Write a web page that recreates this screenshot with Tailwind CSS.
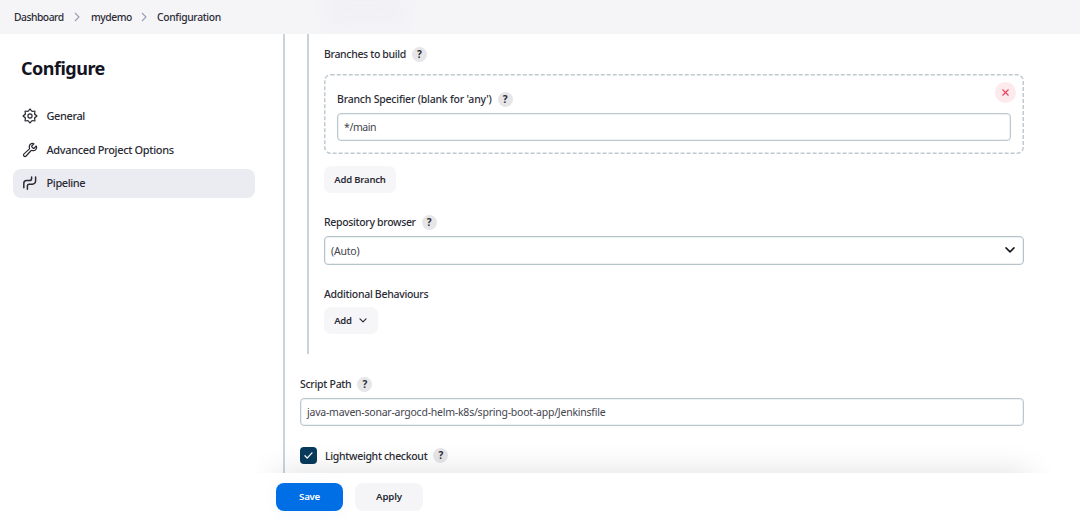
<!DOCTYPE html>
<html lang="en">
<head>
    <meta charset="UTF-8">
    <meta name="viewport" content="width=device-width, initial-scale=1.0">
    <title>mydemo Config [Jenkins]</title>
    <script src="https://cdn.jsdelivr.net/npm/@tailwindcss/browser@4"></script>
</head>
<body class="h-[520px] overflow-hidden flex flex-col bg-white text-[#2b2b35] font-['Noto_Sans',sans-serif] text-[10.5px] leading-4 font-medium">
    <!-- Breadcrumbs -->
    <header class="relative h-[34px] shrink-0 flex items-center pl-[14px] bg-[#f5f5f8] overflow-hidden text-[10.3px]">
        <div class="absolute left-[328px] -top-2 w-[76px] h-[34px] rounded-xl bg-[#efeff3]/70 blur-[8px]"></div>
        <span class="w-[50px] whitespace-nowrap tracking-[-0.48px]">Dashboard</span>
        <svg class="ml-[10px] mr-[11px] w-[6px] h-[10px]" viewBox="0 0 6 10" fill="none" stroke="#9b9bb0" stroke-width="1.1"><path d="M1 1l4 4-4 4"/></svg>
        <span class="w-[40px] whitespace-nowrap tracking-[-0.45px]">mydemo</span>
        <svg class="ml-[10px] mr-[10px] w-[6px] h-[10px]" viewBox="0 0 6 10" fill="none" stroke="#9b9bb0" stroke-width="1.1"><path d="M1 1l4 4-4 4"/></svg>
        <span class="whitespace-nowrap tracking-[-0.32px]">Configuration</span>
    </header>

    <div class="flex flex-1 min-h-0">
        <!-- Side panel -->
        <aside class="w-[255px] shrink-0 pl-[12.5px] pt-[22px]">
            <h1 class="pl-[8.5px] h-6 text-[18px] leading-6 font-bold text-[#14141f] tracking-[-0.5px]">Configure</h1>
            <nav class="mt-[21.5px] flex flex-col gap-1 text-[11px]">
                <a class="h-[29.5px] pl-[9px] flex items-center gap-[9px] rounded-[8px] whitespace-nowrap">
                    <svg class="w-4 h-4" viewBox="-8.9 -8.9 17.8 17.8" fill="none" stroke="currentColor" stroke-width="1.35" stroke-linejoin="round"><path d="M-.92-6.62Q0-8.8 .92-6.62T4.03-5.33T5.33-4.03T6.62-.92T6.62 .92T5.33 4.03T4.03 5.33T.92 6.62T-.92 6.62T-4.03 5.33T-5.33 4.03T-6.62 .92T-6.62-.92T-5.33-4.03T-4.03-5.33T-.92-6.62Z"/><circle r="2.3"/></svg>
                    <span class="tracking-[-0.4px]">General</span>
                </a>
                <a class="h-[29.5px] pl-[9px] flex items-center gap-[9px] rounded-[8px] whitespace-nowrap">
                    <svg class="w-4 h-4" viewBox="0 0 512 512" fill="none" stroke="currentColor" stroke-width="40" stroke-linecap="round" stroke-linejoin="round"><path d="M393.87 190a32.1 32.1 0 01-45.25 0l-26.57-26.57a32.09 32.09 0 010-45.26L382.19 58a1 1 0 00-.3-1.64c-38.82-16.64-89.15-8.16-121.11 23.57-30.58 30.35-32.32 76-21.12 115.84a31.93 31.93 0 01-9.06 32.08L64 380a48.17 48.17 0 1068 68l153.86-167a31.93 31.93 0 0131.6-9.13c39.54 10.59 84.54 8.6 114.72-21.19 32.49-32 39.5-88.56 23.75-120.93a1 1 0 00-1.6-.26z"/></svg>
                    <span class="tracking-[-0.35px]">Advanced Project Options</span>
                </a>
                <a class="h-[29.5px] pl-[9px] flex items-center gap-[9px] rounded-[8px] whitespace-nowrap bg-[#ebebf2]">
                    <svg class="w-4 h-4" viewBox="0 0 16 16" fill="none" stroke="currentColor" stroke-width="1.5" stroke-linecap="round" stroke-linejoin="round"><path d="M1.8 12.8V8.4a2.8 2.8 0 012.8-2.8h2.8a2.2 2.2 0 002.2-2.2V1.9M5.4 14.2V11a1.8 1.8 0 011.8-1.8h3.2a3.2 3.2 0 003.2-3.2V1.9"/></svg>
                    <span class="tracking-[-0.4px]">Pipeline</span>
                </a>
            </nav>
        </aside>

        <!-- Form -->
        <main class="relative flex-1 flex flex-col min-w-0">
            <section class="ml-[28px] w-[741px] h-[439px] shrink-0 border-l-2 border-[#ccd4da] pl-[15px]">
                <div class="ml-[7px] h-[320px] border-l-2 border-[#ccd3d8] pl-[15px] pt-3 flex flex-col items-start">
                    <div class="h-4 flex items-center gap-[6px]">
                        <span class="tracking-[-0.34px]">Branches to build</span>
                        <span class="size-[15px] rounded-full bg-[#e6e6e8] text-center text-[10px] leading-[15px] font-bold">?</span>
                    </div>
                    <div class="relative mt-3 w-[700px] h-20 pl-[13px] pt-[17px]">
                        <svg class="absolute inset-0 w-[700px] h-20" fill="none" stroke="#bfcad1" stroke-width="1.5" stroke-dasharray="4 2"><rect x="0.75" y="0.75" width="698.5" height="78.5" rx="6"/></svg>
                        <div class="h-4 flex items-center gap-[6px]">
                            <span class="tracking-[-0.21px]">Branch Specifier (blank for 'any')</span>
                            <span class="size-[15px] rounded-full bg-[#e6e6e8] text-center text-[10px] leading-[15px] font-bold">?</span>
                        </div>
                        <div class="mt-[6px] w-[674px] h-7 rounded-[4px] border border-[#bcc8cf] shadow-[inset_0_0_0_1px_#edf1f3] px-[6px] flex items-center font-normal text-[#44444e]">
                            <span class="tracking-[-0.4px]">*/main</span>
                        </div>
                        <button class="absolute right-[8px] top-[8px] size-[21px] rounded-full bg-[#fdeaed] flex items-center justify-center">
                            <svg class="w-[7px] h-[7px]" viewBox="0 0 7 7" stroke="#e6405c" stroke-width="1.1"><path d="M.5.5l6 6M6.5.5l-6 6"/></svg>
                        </button>
                    </div>
                    <button class="mt-3 w-[72px] h-[27px] shrink-0 rounded-[7px] bg-[#f6f6f8] text-[9.5px] font-semibold whitespace-nowrap tracking-[-0.2px]"><span>Add Branch</span></button>
                    <div class="mt-[21px] h-4 flex items-center gap-[6px]">
                        <span class="tracking-[-0.33px]">Repository browser</span>
                        <span class="size-[15px] rounded-full bg-[#e6e6e8] text-center text-[10px] leading-[15px] font-bold">?</span>
                    </div>
                    <div class="mt-[6px] w-[700px] h-[29px] shrink-0 rounded-[4px] border border-[#b5c4cb] shadow-[inset_0_0_0_1px_#edf1f3] pl-[6px] pr-[8px] flex items-center justify-between font-normal text-[#44444e]">
                        <span class="tracking-[-0.2px]">(Auto)</span>
                        <svg class="w-[10px] h-[6px] -mt-0.5" viewBox="0 0 10 6" fill="none" stroke="#14141f" stroke-width="1.5" stroke-linecap="round" stroke-linejoin="round"><path d="M1 .9l4 4 4-4"/></svg>
                    </div>
                    <div class="mt-[21px] h-4 tracking-[-0.3px]"><span>Additional Behaviours</span></div>
                    <button class="mt-[5px] w-[54px] h-[27px] shrink-0 rounded-[7px] bg-[#f6f6f8] pl-[10px] flex items-center gap-[7px] text-[9.5px] font-semibold">
                        <span class="w-[18px] tracking-[-0.2px]">Add</span>
                        <svg class="w-2 h-[5px]" viewBox="0 0 8 5" fill="none" stroke="currentColor" stroke-width="1.2" stroke-linecap="round" stroke-linejoin="round"><path d="M1 .8l3 3 3-3"/></svg>
                    </button>
                </div>
                <div class="mt-[22px] h-4 flex items-center gap-[6px]">
                    <span class="tracking-[-0.28px]">Script Path</span>
                    <span class="size-[15px] rounded-full bg-[#e6e6e8] text-center text-[10px] leading-[15px] font-bold">?</span>
                </div>
                <div class="mt-[6px] w-[724px] h-7 rounded-[4px] border border-[#bcc8cf] shadow-[inset_0_0_0_1px_#edf1f3] px-[6px] flex items-center font-normal text-[#44444e]">
                    <span class="tracking-[-0.23px]">java-maven-sonar-argocd-helm-k8s/spring-boot-app/Jenkinsfile</span>
                </div>
                <div class="mt-[21px] h-[17px] flex items-center">
                    <span class="size-[17px] rounded-[4px] bg-[#073a5c] flex items-center justify-center">
                        <svg class="w-[9px] h-[7px]" viewBox="0 0 9 7" fill="none" stroke="white" stroke-width="1.3" stroke-linecap="round" stroke-linejoin="round"><path d="M1 3.8l2.2 2.3L8 .9"/></svg>
                    </span>
                    <span class="ml-[8px] mr-[6px] tracking-[-0.31px]">Lightweight checkout</span>
                    <span class="size-[15px] rounded-full bg-[#e6e6e8] text-center text-[10px] leading-[15px] font-bold">?</span>
                </div>
            </section>
            <!-- Shadow cast by the sticky bar -->
            <div class="absolute left-0 right-0 top-[399px] h-[40px] overflow-hidden pointer-events-none">
                <div class="mt-[40px] ml-[20px] w-[755px] h-[100px] shadow-[0_0_30px_rgba(0,0,0,0.13)]"></div>
            </div>
            <div class="h-[47px] pl-[21px] pt-[10px] flex gap-[12px] text-[9.7px] font-semibold">
                <button class="w-[67px] h-[28px] rounded-[8px] bg-[#006fe6] text-white shadow-[0_2px_16px_rgba(0,111,230,0.05)] tracking-[-0.3px]"><span>Save</span></button>
                <button class="w-[68px] h-[28px] rounded-[8px] bg-[#f5f5f8] tracking-[-0.15px]"><span>Apply</span></button>
            </div>
        </main>
    </div>
</body>
</html>
